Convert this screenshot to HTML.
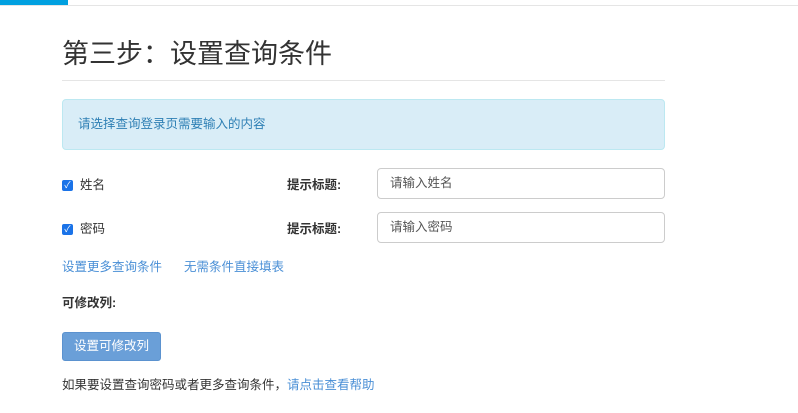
<!DOCTYPE html>
<html><head><meta charset="utf-8"><style>
*{margin:0;padding:0;box-sizing:border-box}
body{width:798px;height:413px;background:#fff;font-family:"Liberation Sans","Noto Sans CJK SC",sans-serif;font-size:12.5px;color:#333;position:relative;overflow:hidden}
.a{position:absolute}
.cb{width:11px;height:11px;background:#1a73e8;border-radius:2px;color:#fff;font-size:9px;line-height:11px;text-align:center}
.inp{border:1px solid #ccc;border-radius:4px;width:288px;height:31px;padding-left:12px;line-height:29px;color:#555}
a{color:#4a8fd6;text-decoration:none}
</style></head><body>
<div class="a" style="left:0;top:5px;width:798px;height:1px;background:#e5e5e5"></div>
<div class="a" style="left:0;top:0;width:68px;height:5px;background:#00a0e0"></div>
<div class="a" style="left:62px;top:36px;font-size:27px;color:#333;line-height:36px">第三步：设置查询条件</div>
<div class="a" style="left:62px;top:80px;width:603px;height:1px;background:#e5e5e5"></div>
<div class="a" style="left:62px;top:99px;width:603px;height:51px;background:#d9edf7;border:1px solid #bce8f1;border-radius:4px;color:#2f80b5;padding-left:15px;line-height:49px">请选择查询登录页需要输入的内容</div>
<div class="a cb" style="left:62px;top:180px">✓</div>
<div class="a" style="left:80px;top:176px;line-height:18px">姓名</div>
<div class="a" style="left:287px;top:176px;line-height:18px;font-weight:bold">提示标题:</div>
<div class="a inp" style="left:377px;top:168px">请输入姓名</div>
<div class="a cb" style="left:62px;top:224px">✓</div>
<div class="a" style="left:80px;top:220px;line-height:18px">密码</div>
<div class="a" style="left:287px;top:220px;line-height:18px;font-weight:bold">提示标题:</div>
<div class="a inp" style="left:377px;top:212px">请输入密码</div>
<div class="a" style="left:62px;top:258px;line-height:18px"><a>设置更多查询条件</a><a style="margin-left:22px">无需条件直接填表</a></div>
<div class="a" style="left:62px;top:294px;line-height:18px;font-weight:bold">可修改列:</div>
<div class="a" style="left:62px;top:332px;width:99px;height:29px;background:#6a9fd8;border:1px solid #5b92cf;border-radius:3px;color:#fff;text-align:center;line-height:27px">设置可修改列</div>
<div class="a" style="left:62px;top:376px;line-height:18px">如果要设置查询密码或者更多查询条件，<a>请点击查看帮助</a></div>
</body></html>
